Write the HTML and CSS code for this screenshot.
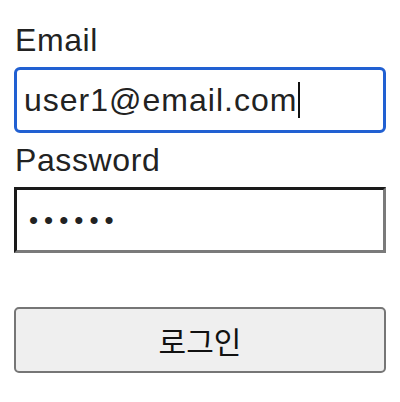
FILE: index.html
```html
<!DOCTYPE html>
<html lang="ko">
<head>
<meta charset="utf-8">
<title>로그인</title>
<link rel="stylesheet" href="styles.css">
</head>
<body>
<form class="login">
  <label class="label">Email</label>
  <div class="field field-focused"><span class="value">user1@email.com</span><span class="caret"></span></div>
  <label class="label">Password</label>
  <div class="field field-inset"><span class="dots">••••••</span></div>
  <button type="button" class="btn">로그인</button>
</form>
</body>
</html>
```
FILE: styles.css
```css
html, body {
  margin: 0;
  padding: 0;
  background: #ffffff;
}
body {
  font-family: "Liberation Sans", Arial, "Noto Sans CJK KR", sans-serif;
  color: #222222;
}
.login {
  display: flex;
  flex-direction: column;
  width: 372px;
  margin: 0 0 0 14px;
  padding-top: 13px;
}
.label {
  display: block;
  font-size: 32px;
  line-height: 54px;
  height: 54px;
  padding-left: 1px;
  letter-spacing: 0.6px;
  color: #222222;
}
.field {
  box-sizing: border-box;
  height: 66px;
  width: 372px;
  display: flex;
  align-items: center;
  font-size: 32px;
  background: #ffffff;
}
.field-focused {
  border: 3px solid #2160d2;
  border-radius: 6px;
  padding-left: 7px;
}
.value {
  color: #222222;
  white-space: nowrap;
  letter-spacing: 1px;
}
.caret {
  display: inline-block;
  width: 2px;
  height: 36px;
  background: #111111;
  margin-left: 1px;
}
.field-inset {
  border-style: solid;
  border-width: 3px;
  border-top-color: #1a1a1a;
  border-left-color: #1a1a1a;
  border-right-color: #7a7a7a;
  border-bottom-color: #7a7a7a;
  padding-left: 12px;
}
.dots {
  font-size: 26px;
  letter-spacing: 6px;
  color: #222222;
}
.btn {
  box-sizing: border-box;
  margin-top: 54px;
  height: 66px;
  width: 372px;
  background: #efefef;
  border: 2px solid #767676;
  border-radius: 5px;
  font-family: "Noto Sans CJK KR", sans-serif;
  font-size: 30px;
  color: #111111;
  padding: 0;
}
```
